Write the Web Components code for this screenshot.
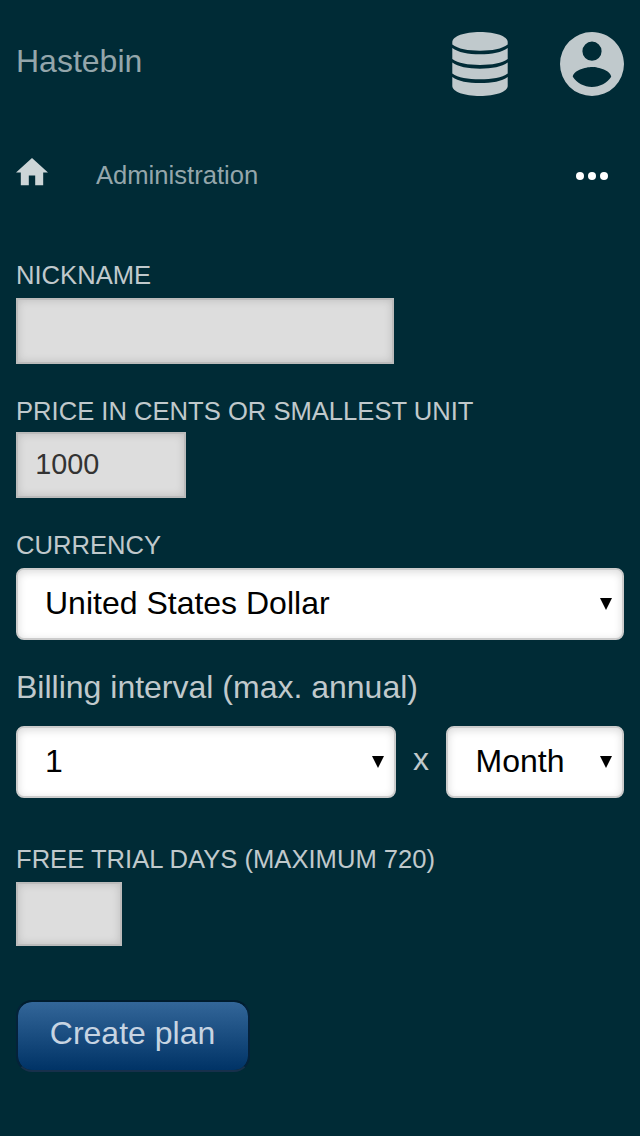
<!DOCTYPE html>
<html lang="en">
<head>
<meta charset="utf-8">
<title>Hastebin</title>
<style>
  body { margin: 0; background: #002b36; color: #c0c9cc; font-family: "Liberation Sans", Arial, sans-serif; }
</style>
</head>
<body>
<plan-page></plan-page>
<script>
const define = (name, html) => {
  const template = document.createElement('template');
  template.innerHTML = html;
  customElements.define(name, class extends HTMLElement {
    constructor() {
      super();
      this.attachShadow({ mode: 'open' }).append(template.content.cloneNode(true));
    }
  });
};

define('site-header', `
<style>
  :host { display: flex; align-items: flex-start; height: 64px; }
  .title { flex: 1; margin-top: 11px; font-size: 32px; line-height: 36px; color: #94a6ab; }
  svg { display: block; fill: #c0c9cc; }
  .data { margin-right: 52px; }
</style>
<div class="title"><slot></slot></div>
<svg class="data" width="56" height="64" viewBox="0 0 56 64">
  <path d="M.3 10C.3 4.3 12.5 0 28 0S55.7 4.3 55.7 10V12.6C50 17 40 18.8 28 18.8S6 17 .3 12.6Z"/>
  <path d="M.3 15.9C6 20.3 16 22.2 28 22.2S50 20.3 55.7 15.9V27.1C50 31.3 40 33 28 33S6 31.3 .3 27.1Z"/>
  <path d="M.3 30.6C6 34.8 16 36.8 28 36.8S50 34.8 55.7 30.6V41.5C50 45.6 40 47.3 28 47.3S6 45.6 .3 41.5Z"/>
  <path d="M.3 44.9C6 49.2 16 51.1 28 51.1S50 49.2 55.7 44.9V54C55.7 59.7 43.5 64 28 64S.3 59.7 .3 54Z"/>
</svg>
<svg width="64" height="64" viewBox="2 2 20 20">
  <path d="M12 19.2C9.5 19.2 7.29 17.92 6 16C6.03 14 10 12.9 12 12.9C14 12.9 17.97 14 18 16C16.71 17.92 14.5 19.2 12 19.2M12 5A3 3 0 0 1 15 8A3 3 0 0 1 12 11A3 3 0 0 1 9 8A3 3 0 0 1 12 5M12 2A10 10 0 0 0 2 12A10 10 0 0 0 12 22A10 10 0 0 0 22 12C22 6.47 17.5 2 12 2Z"/>
</svg>`);

define('nav-bar', `
<style>
  :host { display: flex; align-items: flex-start; height: 30px; font-size: 25.6px; line-height: 30px; color: #94a6ab; }
  svg { display: block; }
  .home { fill: #ccd5d7; margin: -1.6px 48px 0 0; }
  .text { flex: 1; }
  .more { fill: #fff; margin: 12px 16px 0 0; }
</style>
<svg class="home" width="32" height="27.2" viewBox="2 3 20 17"><path d="M10 20V14H14V20H19V12H22L12 3L2 12H5V20H10Z"/></svg>
<div class="text"><slot></slot></div>
<svg class="more" width="32" height="8" viewBox="0 0 32 8"><circle cx="4" cy="4" r="4"/><circle cx="16" cy="4" r="4"/><circle cx="28" cy="4" r="4"/></svg>`);

define('field-label', `
<style>
  :host { display: block; font-size: 25.6px; line-height: 30px; text-transform: uppercase; white-space: nowrap; }
</style>
<slot></slot>`);

define('text-box', `
<style>
  :host { display: block; box-sizing: border-box; width: var(--w); height: var(--h, 66px); padding-left: 17.2px;
    border: 2px solid #bbb; background: #ddd; box-shadow: inset 0 0 8px rgba(0,0,0,.15);
    color: #333; font-size: 28.8px; line-height: 60px; }
</style>
<slot></slot>`);

define('select-box', `
<style>
  :host { display: flex; align-items: center; justify-content: space-between; box-sizing: border-box; height: 72px; padding: 0 10px 0 var(--indent, 27px);
    border: 2px solid #ccc; border-radius: 8px; background: #fff; box-shadow: inset 0 2px 8px rgba(0,0,0,.15);
    color: #000; font-size: 32px; line-height: 36px; white-space: nowrap; }
  .value { margin-bottom: 2px; }
  svg { display: block; }
</style>
<span class="value"><slot></slot></span>
<svg width="12" height="12" viewBox="0 0 12 12"><path d="M0 0H12L6 12Z"/></svg>`);

define('interval-row', `
<style>
  :host { display: grid; grid-template-columns: 380px 50px 178px; align-items: center; }
  .times { text-align: center; font-size: 32px; line-height: 36px; margin-bottom: 6px; }
</style>
<slot name="count"></slot><span class="times">x</span><slot name="unit"></slot>`);

define('submit-button', `
<style>
  :host { display: block; width: max-content; }
  button { display: block; box-sizing: border-box; width: 234px; height: 72px; margin: 0; padding: 0 1px 6px 0;
    border: 2px solid; border-color: #001c2e #04223a #17304b; border-radius: 16px;
    background: linear-gradient(#336699, #003366) padding-box; color: #c7d4e2; font: 32px/36px "Liberation Sans", Arial, sans-serif; }
</style>
<button type="button"><slot></slot></button>`);

define('plan-page', `
<style>
  :host { display: flex; flex-direction: column; box-sizing: border-box; height: 1136px; padding: 32px 16px; }
  nav-bar { margin: 64px 0 70px; }
  text-box, select-box { margin-top: 8px; }
  .price { margin-top: 6px; }
  field-label.next { margin-top: 32px; }
  .interval { margin-top: 29px; font-size: 32px; line-height: 36px; }
  interval-row { margin-top: 21px; }
  interval-row select-box { margin: 0; }
  field-label.trial { margin-top: 46px; }
  submit-button { margin-top: 54px; }
</style>
<site-header>Hastebin</site-header>
<nav-bar>Administration</nav-bar>
<field-label>Nickname</field-label>
<text-box style="--w:378px"></text-box>
<field-label class="next">Price in cents or smallest unit</field-label>
<text-box class="price" style="--w:170px">1000</text-box>
<field-label class="next">Currency</field-label>
<select-box>United States Dollar</select-box>
<div class="interval">Billing interval (max. annual)</div>
<interval-row>
  <select-box slot="count">1</select-box>
  <select-box slot="unit" style="--indent:27.6px">Month</select-box>
</interval-row>
<field-label class="trial">Free trial days (maximum 720)</field-label>
<text-box style="--w:106px;--h:64px"></text-box>
<submit-button>Create plan</submit-button>`);
</script>
</body>
</html>
